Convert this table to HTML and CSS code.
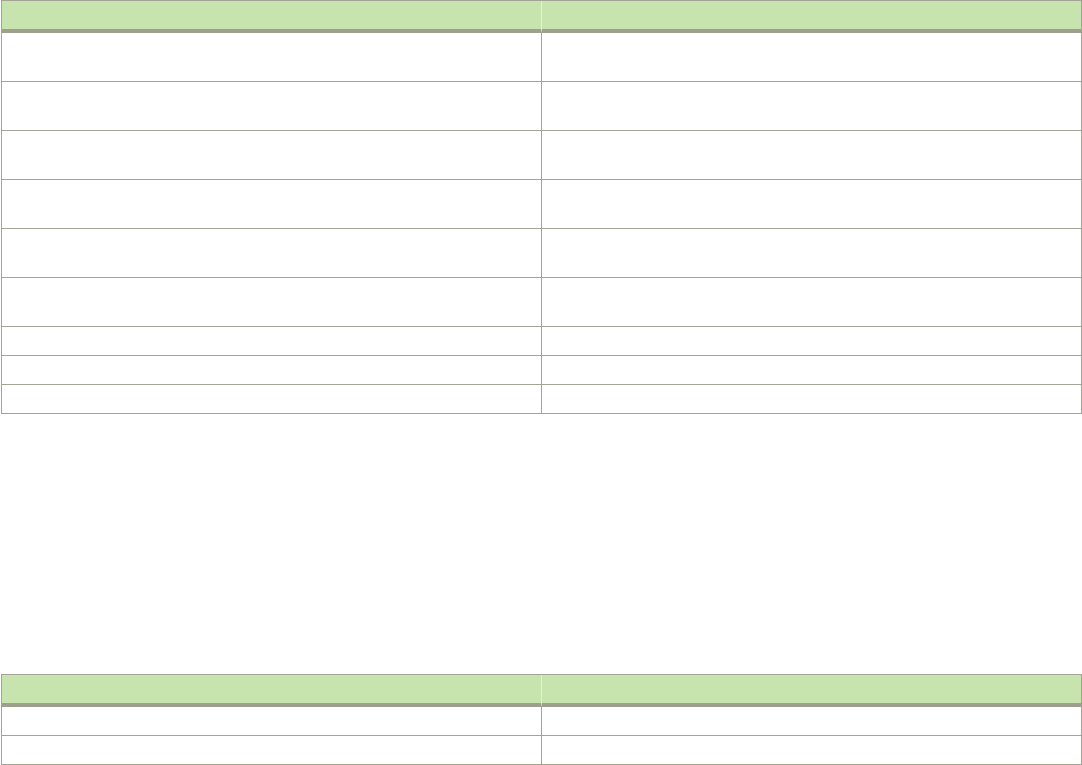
FILE: index.html
```html
<!DOCTYPE html>
<html lang="en">
<head>
<meta charset="utf-8">
<title>Tables</title>
<link rel="stylesheet" href="styles.css">
</head>
<body>
<div class="page">
  <div class="tbl">
    <div class="th first"></div><div class="th"></div>
    <div class="td tall"></div><div class="td tall"></div>
    <div class="td tall"></div><div class="td tall"></div>
    <div class="td tall"></div><div class="td tall"></div>
    <div class="td tall"></div><div class="td tall"></div>
    <div class="td tall"></div><div class="td tall"></div>
    <div class="td tall"></div><div class="td tall"></div>
    <div class="td short"></div><div class="td short"></div>
    <div class="td short"></div><div class="td short"></div>
    <div class="td short"></div><div class="td short"></div>
  </div>
  <div class="spacer"></div>
  <div class="tbl">
    <div class="th first"></div><div class="th"></div>
    <div class="td short"></div><div class="td short"></div>
    <div class="td short"></div><div class="td short"></div>
  </div>
</div>
</body>
</html>
```

FILE: styles.css
```css
html, body {
  margin: 0;
  padding: 0;
  background: #ffffff;
  font-family: "Liberation Sans", Arial, sans-serif;
}

.page {
  display: flex;
  flex-direction: column;
  padding-left: 1px;
}

.tbl {
  display: grid;
  grid-template-columns: 540px 540px;
  width: max-content;
  border-top: 1px solid #a3a396;
  border-left: 1px solid #a3a396;
}

.th,
.td {
  box-sizing: border-box;
  border-right: 1px solid #a3a396;
}

.th {
  height: 32px;
  background: #c7e3ae;
  border-bottom: 4px solid #9e9f8f;
}

.th.first {
  border-right-color: #e6efdc;
}

.td {
  background: #ffffff;
  border-bottom: 1px solid #a3a396;
}

.td.tall {
  height: 49px;
}

.td.short {
  height: 29px;
}

.spacer {
  height: 260px;
}
```
